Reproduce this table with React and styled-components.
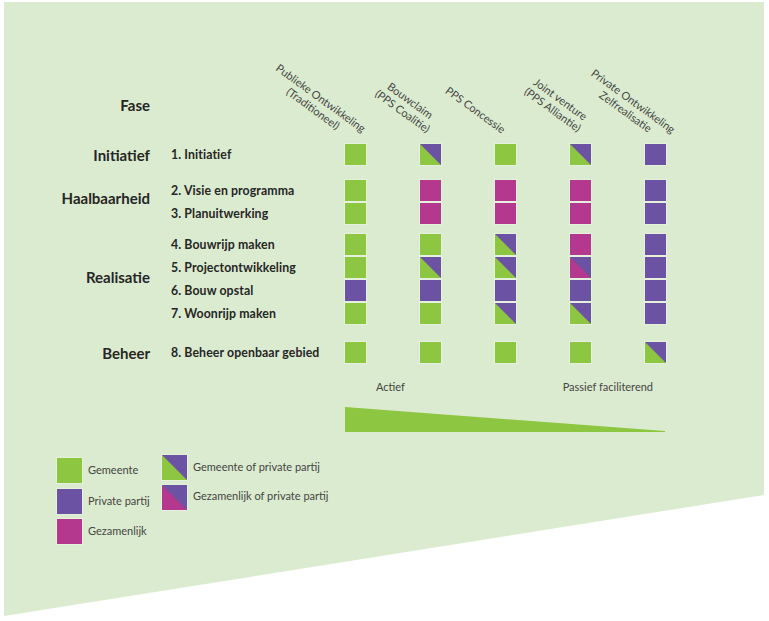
import React from "react";
import styled, { createGlobalStyle } from "styled-components";

const colors = {
  bg: "#dbebcf",
  green: "#8dc641",
  purple: "#6b52a3",
  magenta: "#b5388f",
  text: "#262626",
  soft: "#454545",
};

const split = (a, b) =>
  `linear-gradient(to top right, ${a} calc(50% - 0.6px), ${b} calc(50% + 0.6px))`;

const fills = {
  g: colors.green,
  p: colors.purple,
  m: colors.magenta,
  gp: split(colors.green, colors.purple),
  mp: split(colors.magenta, colors.purple),
};

const GlobalStyle = createGlobalStyle`
  body {
    margin: 0;
    background: #ffffff;
    font-family: Lato, "Liberation Sans", sans-serif;
  }
`;

const Page = styled.div`
  margin: 2px 0 0 4px;
  width: 760px;
  height: 614px;
  box-sizing: border-box;
  padding-top: 83px;
  background: ${colors.bg};
  clip-path: polygon(0 0, 100% 0, 100% 493px, 0 100%);
`;

const Line = styled.div`
  display: flex;
  align-items: center;
  margin-top: ${({ $gap }) => $gap || 0}px;
`;

const PhaseLabel = styled.div`
  width: 146px;
  margin-right: 21px;
  text-align: right;
  font-size: 15px;
  font-weight: 700;
  color: ${colors.text};
  transform: translateY(${({ $shift }) => $shift || 0}px);
`;

const Rows = styled.div`
  display: flex;
  flex-direction: column;
  gap: 2px;
`;

const Row = styled.div`
  display: flex;
  align-items: center;
`;

const RowLabel = styled.div`
  width: 174px;
  font-size: 12.3px;
  font-weight: 700;
  color: ${colors.text};
  letter-spacing: 0.1px;
`;

const Cells = styled.div`
  display: grid;
  grid-template-columns: repeat(5, 21px);
  column-gap: 54px;
`;

const Swatch = styled.div`
  width: ${({ $size }) => $size || 21}px;
  height: ${({ $size }) => $size || 21}px;
  background: ${({ $kind }) => fills[$kind]};
  box-shadow: 0 0 0 1px rgba(255, 255, 255, 0.3);
`;

const HeadCells = styled(Cells)`
  height: 40px;
`;

const HeadCell = styled.div`
  display: flex;
  justify-content: center;
  align-items: center;
  height: 40px;
`;

const HeadText = styled.div`
  flex: none;
  white-space: nowrap;
  text-align: center;
  font-size: 11px;
  line-height: 13px;
  color: ${colors.soft};
  transform: translate(${({ $dx }) => $dx}px, ${({ $dy }) => $dy}px) rotate(36deg);
`;

const Scale = styled.div`
  display: flex;
  width: 320px;
  margin-left: 341px;
  font-size: 11px;
  color: ${colors.soft};
`;

const ScaleLeft = styled.span`
  margin-left: 31px;
`;

const ScaleRight = styled.span`
  margin-left: auto;
  margin-right: 12px;
`;

const Wedge = styled.svg`
  display: block;
  margin: 14px 0 0 341px;
`;

const Legend = styled.div`
  display: flex;
  align-items: flex-start;
  margin: 23px 0 0 53px;
`;

const LegendCol = styled.div`
  display: flex;
  flex-direction: column;
  gap: ${({ $gap }) => $gap}px;
  width: ${({ $width }) => ($width ? `${$width}px` : "auto")};
  margin-top: ${({ $top }) => $top || 0}px;
`;

const LegendItem = styled.div`
  display: flex;
  align-items: center;
  gap: 6px;
  font-size: 11px;
  color: ${colors.soft};
`;

const LegendText = styled.span`
  margin-top: ${({ $lift }) => -($lift || 2)}px;
`;

const headers = [
  { lines: ["Publieke Ontwikkeling", "(Traditioneel)"], dx: -38.5, dy: -2 },
  { lines: ["Bouwclaim", "(PPS Coalitie)"], dx: -23.5, dy: 0.5 },
  { lines: ["PPS Concessie"], dx: -29.5, dy: 4 },
  { lines: ["Joint venture", "(PPS Alliantie)"], dx: -23.5, dy: -1 },
  { lines: ["Private Ontwikkeling", "Zelfrealisatie"], dx: -25.5, dy: 1 },
];

const phases = [
  {
    name: "Initiatief",
    gap: 19,
    rows: [["1. Initiatief", ["g", "gp", "g", "gp", "p"]]],
  },
  {
    name: "Haalbaarheid",
    gap: 15,
    shift: -4,
    rows: [
      ["2. Visie en programma", ["g", "m", "m", "m", "p"]],
      ["3. Planuitwerking", ["g", "m", "m", "m", "p"]],
    ],
  },
  {
    name: "Realisatie",
    gap: 10,
    shift: -2,
    rows: [
      ["4. Bouwrijp maken", ["g", "g", "gp", "m", "p"]],
      ["5. Projectontwikkeling", ["g", "gp", "gp", "mp", "p"]],
      ["6. Bouw opstal", ["p", "p", "p", "p", "p"]],
      ["7. Woonrijp maken", ["g", "g", "gp", "gp", "p"]],
    ],
  },
  {
    name: "Beheer",
    gap: 18,
    rows: [["8. Beheer openbaar gebied", ["g", "g", "g", "g", "gp"]]],
  },
];

const App = () => {
  return (
    <React.Fragment>
      <GlobalStyle />
      <Page>
        <Line>
          <PhaseLabel>Fase</PhaseLabel>
          <RowLabel />
          <HeadCells>
            {headers.map((h) => (
              <HeadCell key={h.lines[0]}>
                <HeadText $dx={h.dx} $dy={h.dy}>
                  {h.lines.map((l) => (
                    <div key={l}>{l}</div>
                  ))}
                </HeadText>
              </HeadCell>
            ))}
          </HeadCells>
        </Line>

        {phases.map((phase) => (
          <Line key={phase.name} $gap={phase.gap}>
            <PhaseLabel $shift={phase.shift}>{phase.name}</PhaseLabel>
            <Rows>
              {phase.rows.map(([label, cells]) => (
                <Row key={label}>
                  <RowLabel>{label}</RowLabel>
                  <Cells>
                    {cells.map((kind, i) => (
                      <Swatch key={i} $kind={kind} />
                    ))}
                  </Cells>
                </Row>
              ))}
            </Rows>
          </Line>
        ))}

        <Line $gap={17}>
          <Scale>
            <ScaleLeft>Actief</ScaleLeft>
            <ScaleRight>Passief faciliterend</ScaleRight>
          </Scale>
        </Line>
        <Wedge width="320" height="25" viewBox="0 0 320 25">
          <polygon points="0,0 320,24 320,25 0,25" fill={colors.green} />
        </Wedge>

        <Legend>
          <LegendCol $gap={5.5} $width={105} $top={3}>
            <LegendItem>
              <Swatch $size={25} $kind="g" />
              <LegendText>Gemeente</LegendText>
            </LegendItem>
            <LegendItem>
              <Swatch $size={25} $kind="p" />
              <LegendText>Private partij</LegendText>
            </LegendItem>
            <LegendItem>
              <Swatch $size={25} $kind="m" />
              <LegendText>Gezamenlijk</LegendText>
            </LegendItem>
          </LegendCol>
          <LegendCol $gap={5}>
            <LegendItem>
              <Swatch $size={25} $kind="gp" />
              <LegendText $lift={3}>Gemeente of private partij</LegendText>
            </LegendItem>
            <LegendItem>
              <Swatch $size={25} $kind="mp" />
              <LegendText $lift={5}>Gezamenlijk of private partij</LegendText>
            </LegendItem>
          </LegendCol>
        </Legend>
      </Page>
    </React.Fragment>
  );
};

export default App;
